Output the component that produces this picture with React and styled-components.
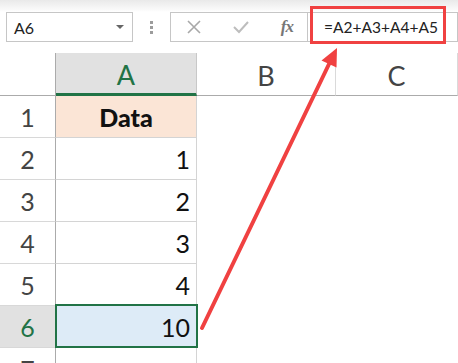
import React from "react"
import styled, { createGlobalStyle } from "styled-components"

const GlobalStyle = createGlobalStyle`
    html, body {
        margin: 0;
        padding: 0;
        background: #fff;
        overflow: hidden;
    }
`

const Page = styled.div`
    position: relative;
    width: 458px;
    height: 363px;
    overflow: hidden;
    font-family: Lato, "Open Sans", "Liberation Sans", sans-serif;
    background: #fff;
`

const Toolbar = styled.div`
    height: 53px;
    box-sizing: border-box;
    padding: 12px 0 0 6px;
    display: flex;
    align-items: flex-start;
    background: linear-gradient( #e9e9e9 0px, #fafafa 10px, #fff 12px );
`

const NameBox = styled.div`
    width: 127px;
    height: 30px;
    box-sizing: border-box;
    border: 1px solid #c6c6c6;
    background: #fff;
    display: flex;
    align-items: center;
    justify-content: space-between;
    padding: 0 8px 0 7px;
    font-size: 16px;
    color: #222;
`

const Caret = styled.span`
    width: 0;
    height: 0;
    border-left: 4px solid transparent;
    border-right: 4px solid transparent;
    border-top: 4px solid #666;
`

const Grip = styled.div`
    width: 37px;
    height: 30px;
    display: flex;
    flex-direction: column;
    align-items: center;
    justify-content: center;
    gap: 2px;

    span {
        width: 3px;
        height: 3px;
        background: #9c9c9c;
    }
`

const ButtonGroup = styled.div`
    width: 137px;
    height: 30px;
    box-sizing: border-box;
    border: 1px solid #c6c6c6;
    border-right: none;
    background: #fff;
    display: flex;
    align-items: center;
    justify-content: space-between;
    padding: 0 14px 0 15px;
`

const Fx = styled.span`
    font-family: "Liberation Serif", serif;
    font-style: italic;
    font-weight: bold;
    font-size: 17px;
    color: #777;
    letter-spacing: -1px;
`

const FormulaInput = styled.div`
    flex: 1;
    height: 30px;
    box-sizing: border-box;
    border: 1px solid #c6c6c6;
    background: #fff;
    display: flex;
    align-items: center;
    padding-left: 16px;
    font-size: 15.5px;
    color: #222;
`

const Sheet = styled.div`
    display: grid;
    grid-template-columns: 56px 141px 139px 1fr;
    grid-template-rows: 43px;
    grid-auto-rows: 42px;
`

const Corner = styled.div`
    position: relative;
    border-right: 1px solid #ababab;
    border-bottom: 1px solid #ababab;
    box-sizing: border-box;

    ::after {
        content: '';
        position: absolute;
        right: 3px;
        bottom: 4px;
        width: 0;
        height: 0;
        border-left: 33px solid transparent;
        border-bottom: 35px solid #dfdfdf;
    }
`

const ColHeader = styled.div`
    box-sizing: border-box;
    display: flex;
    align-items: center;
    justify-content: center;
    padding-top: 2px;
    font-size: 27px;
    color: ${ p => p.$active ? "#217346" : "#444" };
    background: ${ p => p.$active ? "#e1e1e1" : "#fff" };
    border-right: 1px solid ${ p => p.$active ? "#c8c8c8" : "#dadada" };
    border-bottom: ${ p => p.$active ? "3px solid #217346" : "1px solid #ababab" };
`

const RowHeader = styled.div`
    box-sizing: border-box;
    display: flex;
    align-items: center;
    justify-content: center;
    font-size: 25px;
    color: ${ p => p.$active ? "#217346" : "#444" };
    background: ${ p => p.$active ? "#e1e1e1" : "#fff" };
    border-right: 1px solid #ababab;
    border-bottom: 1px solid #d8d8d8;
`

const Cell = styled.div`
    position: relative;
    box-sizing: border-box;
    display: flex;
    align-items: center;
    justify-content: ${ p => p.$center ? "center" : "flex-end" };
    padding: 0 6px;
    font-size: 25px;
    font-weight: ${ p => p.$bold ? 900 : 400 };
    color: #111;
    background: ${ p => p.$bg || "#fff" };
    border-right: 1px solid #d4d4d4;
    border-bottom: 1px solid #d4d4d4;
`

const Selection = styled.div`
    position: absolute;
    left: -1px;
    top: -2px;
    right: -2px;
    bottom: -1px;
    border: 2px solid #217346;

    ::after {
        content: '';
        position: absolute;
        right: -4px;
        bottom: -4px;
        width: 6px;
        height: 6px;
        background: #217346;
        border: 1px solid #fff;
    }
`

const Blank = styled.div``

const Annotation = styled.svg`
    position: absolute;
    left: 0;
    top: 0;
    pointer-events: none;
`

const rows = [
    { n: 1, value: "Data", header: true },
    { n: 2, value: "1" },
    { n: 3, value: "2" },
    { n: 4, value: "3" },
    { n: 5, value: "4" },
    { n: 6, value: "10", active: true },
    { n: 7, value: "" },
]

const App = () => (
    <Page>
        <GlobalStyle />
        <Toolbar>
            <NameBox>A6<Caret /></NameBox>
            <Grip><span /><span /><span /></Grip>
            <ButtonGroup>
                <svg width="16" height="16" viewBox="0 0 16 16">
                    <path d="M2 2 L14 14 M14 2 L2 14" stroke="#a8a8a8" strokeWidth="1.6" fill="none" />
                </svg>
                <svg width="18" height="16" viewBox="0 0 18 16">
                    <path d="M2 8 L7 13 L16 3" stroke="#bdbdbd" strokeWidth="2" fill="none" />
                </svg>
                <Fx>fx</Fx>
            </ButtonGroup>
            <FormulaInput>=A2+A3+A4+A5</FormulaInput>
        </Toolbar>
        <Sheet>
            <Corner />
            <ColHeader $active>A</ColHeader>
            <ColHeader>B</ColHeader>
            <ColHeader>C</ColHeader>
            { rows.map( row => (
                <React.Fragment key={ row.n }>
                    <RowHeader $active={ row.active }>{ row.n }</RowHeader>
                    <Cell
                        $center={ row.header }
                        $bold={ row.header }
                        $bg={ row.header ? "#fbe5d6" : row.active ? "#ddebf7" : null }
                    >
                        { row.value }
                        { row.active && <Selection /> }
                    </Cell>
                    <Blank />
                    <Blank />
                </React.Fragment>
            ) ) }
        </Sheet>
        <Annotation width="458" height="363">
            <rect x="311.5" y="7.5" width="133" height="35" fill="none" stroke="#f04141" strokeWidth="3" />
            <line x1="202" y1="328" x2="330" y2="62" stroke="#f04141" strokeWidth="4" strokeLinecap="round" />
            <polygon points="337,48 321.5,60.5 336.5,67.5" fill="#f04141" />
        </Annotation>
    </Page>
)

export default App
